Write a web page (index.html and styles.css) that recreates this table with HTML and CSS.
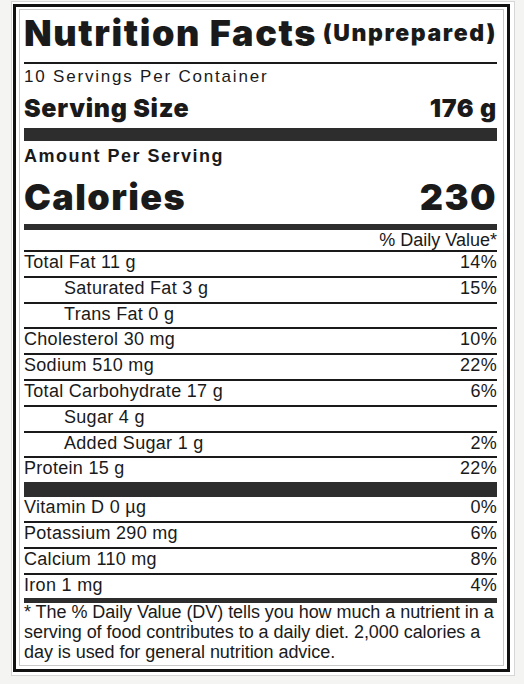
FILE: index.html
```html
<!DOCTYPE html>
<html>
<head>
  <meta charset="UTF-8">
  <link rel="stylesheet" href="styles.css">
</head>
<body>
  <div class="frame">
    <div class="label">
      <div class="inner">
        <div class="title-row">
          <h1>Nutrition Facts</h1>
          <span class="state">(Unprepared)</span>
        </div>
        <p class="servings">10 Servings Per Container</p>
        <div class="serving-size">
          <span>Serving Size</span>
          <span>176 g</span>
        </div>
        <p class="amount">Amount Per Serving</p>
        <div class="calories">
          <span>Calories</span>
          <span>230</span>
        </div>
        <p class="dv-head">% Daily Value*</p>
        <ul class="nutrients">
          <li class="row"><span>Total Fat 11 g</span><span>14%</span></li>
          <li class="row sub"><span>Saturated Fat 3 g</span><span>15%</span></li>
          <li class="row sub"><span>Trans Fat 0 g</span><span></span></li>
          <li class="row"><span>Cholesterol 30 mg</span><span>10%</span></li>
          <li class="row"><span>Sodium 510 mg</span><span>22%</span></li>
          <li class="row"><span>Total Carbohydrate 17 g</span><span>6%</span></li>
          <li class="row sub"><span>Sugar 4 g</span><span></span></li>
          <li class="row sub"><span>Added Sugar 1 g</span><span>2%</span></li>
          <li class="row row-heavy"><span>Protein 15 g</span><span>22%</span></li>
          <li class="row"><span>Vitamin D 0 µg</span><span>0%</span></li>
          <li class="row"><span>Potassium 290 mg</span><span>6%</span></li>
          <li class="row"><span>Calcium 110 mg</span><span>8%</span></li>
          <li class="row row-end"><span>Iron 1 mg</span><span>4%</span></li>
        </ul>
        <p class="footnote">* The % Daily Value (DV) tells you how much a nutrient in a serving of food contributes to a daily diet. 2,000 calories a day is used for general nutrition advice.</p>
      </div>
    </div>
  </div>
</body>
</html>
```

FILE: styles.css
```css
/* 基础 */
* {
  margin: 0;
  padding: 0;
  box-sizing: border-box;
}

:root {
  --ink: #1a1a1a;
  --bar: #2d2d2d;
  --heavy: Inter, "Liberation Sans", sans-serif;
}

body {
  padding: 1px 0 0 11px;
  background: #f4f4f2;
  font-family: "Liberation Sans", Arial, sans-serif;
  color: var(--ink);
}

/* 外框 */
.frame {
  width: 504px;
  background: #fff;
  border: 1px solid #d6d6d6;
  padding: 2px 4px 3px 1px;
}

.label {
  border: 3px solid #111;
  padding: 2px 3px 3px;
}

.inner {
  border: 1px solid #c9c9c9;
  padding: 0 6px 3px 4px;
}

/* 标题 */
.title-row {
  display: flex;
  align-items: center;
  justify-content: space-between;
  padding: 1px 0 7px;
  border-bottom: 2px solid var(--ink);
  line-height: 44px;
}

h1 {
  font-family: var(--heavy);
  font-weight: 900;
  font-size: 36px;
  letter-spacing: 1.6px;
  white-space: nowrap;
}

.state {
  font-family: var(--heavy);
  font-weight: 900;
  font-size: 23px;
  letter-spacing: 1.6px;
  white-space: nowrap;
}

.servings {
  padding-top: 2px;
  font-size: 17px;
  line-height: 22px;
  letter-spacing: 1.8px;
}

.serving-size,
.calories {
  display: flex;
  justify-content: space-between;
  font-family: var(--heavy);
  font-weight: 900;
}

.serving-size {
  padding: 5px 0 5px;
  font-size: 25px;
  line-height: 30px;
  letter-spacing: 0.7px;
  border-bottom: 13px solid var(--bar);
}

.amount {
  padding-top: 4px;
  font-size: 18px;
  font-weight: 700;
  line-height: 22px;
  letter-spacing: 1.5px;
}

.calories {
  padding: 8px 0 5px;
  font-size: 36px;
  line-height: 44px;
  letter-spacing: 1.4px;
  border-bottom: 6px solid var(--bar);
}

.dv-head {
  text-align: right;
  font-size: 18px;
  line-height: 20px;
  border-bottom: 2px solid var(--ink);
}

/* 营养成分行 */
.nutrients {
  list-style: none;
}

.row {
  display: flex;
  justify-content: space-between;
  padding-bottom: 3.8px;
  font-size: 18px;
  line-height: 20px;
  letter-spacing: 0.3px;
  border-bottom: 2px solid var(--ink);
}

.row.sub {
  padding-left: 40px;
}

.row-heavy {
  border-bottom: 15px solid var(--bar);
}

.row-end {
  border-bottom: 5px solid var(--bar);
}

.footnote {
  font-size: 18px;
  line-height: 19.7px;
  letter-spacing: -0.05px;
}
```
